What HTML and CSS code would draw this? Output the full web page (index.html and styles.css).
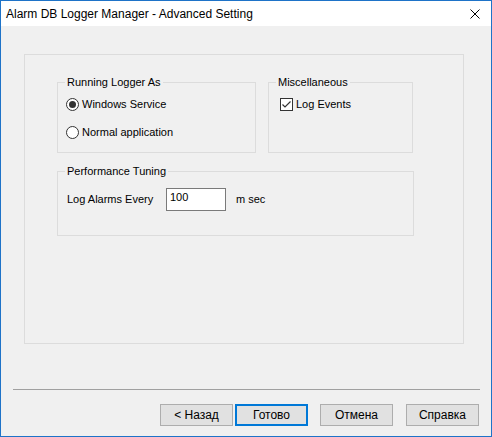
FILE: index.html
```html
<!DOCTYPE html>
<html>
<head>
<meta charset="utf-8">
<title>Alarm DB Logger Manager - Advanced Setting</title>
<link rel="stylesheet" href="styles.css">
</head>
<body>
<div class="window">
  <div class="titlebar">
    <span class="title">Alarm DB Logger Manager - Advanced Setting</span>
    <svg class="close" width="10" height="10" viewBox="0 0 10 10"><path d="M0.5 0.5L9.5 9.5M9.5 0.5L0.5 9.5" stroke="#000" stroke-width="1" fill="none"/></svg>
  </div>
  <div class="content">
    <div class="panel">
      <div class="row">
        <div class="group g-run">
          <span class="legend">Running Logger As</span>
          <div class="opt">
            <svg class="mark" width="13" height="13" viewBox="0 0 13 13"><circle cx="6.5" cy="6.5" r="6" fill="#fff" stroke="#333"/><circle cx="6.5" cy="6.5" r="3.5" fill="#333"/></svg>
            <span>Windows Service</span>
          </div>
          <div class="opt">
            <svg class="mark" width="13" height="13" viewBox="0 0 13 13"><circle cx="6.5" cy="6.5" r="6" fill="#fff" stroke="#333"/></svg>
            <span>Normal application</span>
          </div>
        </div>
        <div class="group g-misc">
          <span class="legend">Miscellaneous</span>
          <div class="opt">
            <svg class="mark" width="13" height="13" viewBox="0 0 13 13"><rect x="0.5" y="0.5" width="12" height="12" fill="#fff" stroke="#333"/><path d="M2.5 6.5L5 9L10.5 3.5" fill="none" stroke="#333" stroke-width="1.2"/></svg>
            <span>Log Events</span>
          </div>
        </div>
      </div>
      <div class="group g-perf">
        <span class="legend">Performance Tuning</span>
        <span class="perf-label">Log Alarms Every</span>
        <div class="field">100</div>
        <span class="unit">m sec</span>
      </div>
    </div>
    <div class="sep"></div>
    <div class="buttons">
      <div class="btn">&lt; Назад</div>
      <div class="btn btn-default">Готово</div>
      <div class="btn btn-cancel">Отмена</div>
      <div class="btn btn-help">Справка</div>
    </div>
  </div>
</div>
</body>
</html>
```
FILE: styles.css
```css
body {
  margin: 0;
  font-family: "Liberation Sans", Arial, sans-serif;
  font-size: 11px;
  color: #000;
}
.window {
  width: 492px;
  height: 437px;
  box-sizing: border-box;
  border: 1px solid #1e73c8;
  background: #f0f0f0;
  display: flex;
  flex-direction: column;
}
.titlebar {
  height: 25px;
  background: #fff;
  display: flex;
  align-items: center;
  padding-left: 5px;
}
.title {
  font-size: 12px;
}
.close {
  margin-left: auto;
  margin-right: 11px;
}
.panel {
  margin: 28px 0 0 23px;
  width: 440px;
  height: 290px;
  box-sizing: border-box;
  border: 1px solid #dcdcdc;
  padding: 27px 0 0 32px;
}
.row {
  display: flex;
  gap: 12px;
}
.group {
  position: relative;
  border: 1px solid #dcdcdc;
  box-sizing: border-box;
}
.legend {
  position: absolute;
  top: -7px;
  left: 7px;
  padding: 0 2px;
  background: #f0f0f0;
  line-height: 13px;
}
.g-run {
  width: 199px;
  height: 71px;
  padding: 15px 0 0 8px;
}
.g-misc {
  width: 145px;
  height: 71px;
  padding: 15px 0 0 11px;
}
.opt {
  display: flex;
  align-items: center;
  gap: 3px;
  height: 13px;
  line-height: 13px;
}
.opt + .opt {
  margin-top: 15px;
}
.mark {
  display: block;
  flex: none;
}
.g-perf {
  width: 357px;
  height: 65px;
  margin-top: 18px;
  padding: 16px 0 0 9px;
  display: flex;
  align-items: flex-start;
}
.perf-label {
  width: 99px;
  line-height: 13px;
  margin-top: 5px;
}
.field {
  width: 60px;
  height: 23px;
  box-sizing: border-box;
  border: 1px solid #7a7a7a;
  background: #fff;
  padding: 2px 0 0 3px;
  line-height: 13px;
}
.unit {
  margin-left: 10px;
  line-height: 13px;
  margin-top: 5px;
}
.sep {
  margin: 45px 0 0 12px;
  width: 467px;
  height: 1px;
  background: #a0a0a0;
}
.buttons {
  display: flex;
  margin: 14px 0 0 159px;
}
.btn {
  width: 73px;
  height: 22px;
  box-sizing: border-box;
  border: 1px solid #adadad;
  background: #e1e1e1;
  display: flex;
  align-items: center;
  justify-content: center;
  font-size: 12px;
}
.btn-default {
  margin-left: 2px;
  border: 2px solid #0078d7;
}
.btn-cancel {
  margin-left: 12px;
}
.btn-help {
  margin-left: 13px;
}
```
